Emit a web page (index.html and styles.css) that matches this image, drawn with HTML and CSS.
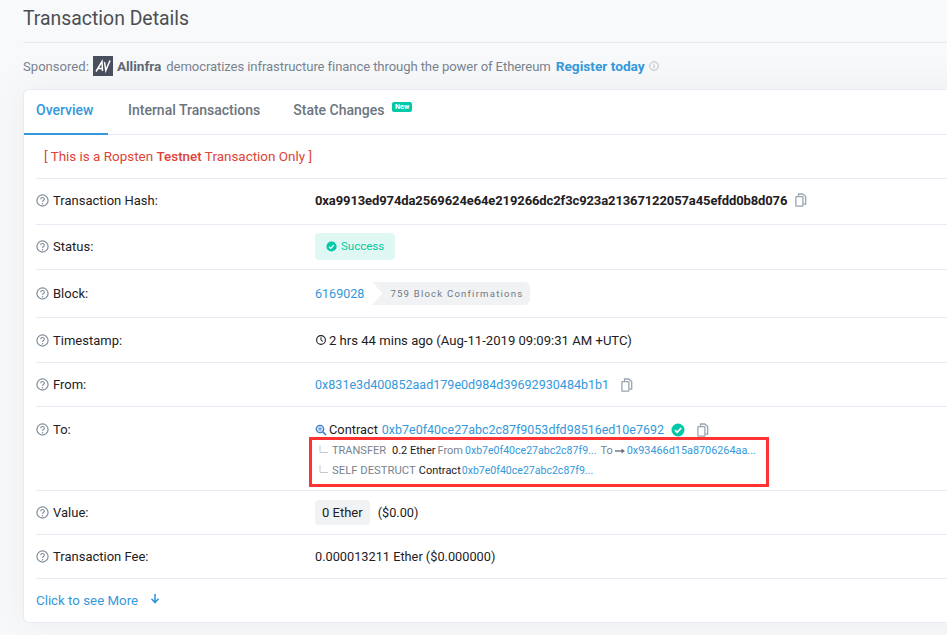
FILE: index.html
```html
<!DOCTYPE html>
<html lang="en">
<head>
<meta charset="utf-8">
<title>Transaction Details</title>
<link rel="stylesheet" href="styles.css">
</head>
<body>
<svg class="defs" width="0" height="0" aria-hidden="true">
  <symbol id="q" viewBox="0 0 14 14"><circle cx="7" cy="7" r="6" fill="none" stroke="#808c98" stroke-width="1.300"/><path d="M5 5.600c0-1.100.9-1.900 2-1.900s2 .8 2 1.800c0 1.500-2 1.400-2 3" fill="none" stroke="#808c98" stroke-width="1.200"/><circle cx="7" cy="10.400" r=".8" fill="#808c98"/></symbol>
  <symbol id="copy" viewBox="0 0 14 14"><path d="M4.500 3.500V1h4.200L11.700 3.500V11H9.500" fill="none" stroke="#9aa5b1" stroke-width="1.300"/><rect x="1.900" y="3.600" width="7" height="9.600" rx=".5" fill="#fff" stroke="#9aa5b1" stroke-width="1.300"/></symbol>
  <symbol id="check" viewBox="0 0 14 14"><circle cx="7" cy="7" r="6.500" fill="#00c9a7"/><path d="M3.900 7.200l2.200 2.200 4-4.200" fill="none" stroke="#fff" stroke-width="1.700"/></symbol>
  <symbol id="corner" viewBox="0 0 9 9"><path d="M1 0v7.500h8" fill="none" stroke="#c2c8d0" stroke-width="1"/></symbol>
</svg>
<main class="page">
  <h1 class="title">Transaction Details</h1>
  <p class="sponsor">
    <span>Sponsored:</span>
    <svg class="logo" viewBox="0 0 20 20" aria-hidden="true"><rect width="20" height="20" fill="#4a4f60"/><path d="M3 15.500L9 5.500l.5 9.500M5 12.500h4.300M11.500 6l1.300 8.500L17 4.500" fill="none" stroke="#fff" stroke-width="1.500"/></svg>
    <b class="brand">Allinfra</b>
    <span class="pitch">democratizes infrastructure finance through the power of Ethereum</span>
    <a class="register" href="#">Register today</a>
    <svg class="info" viewBox="0 0 10 10" aria-hidden="true"><circle cx="5" cy="5" r="4.300" fill="none" stroke="#a5adb8" stroke-width=".8"/><path d="M5 4.300v3M5 2.600v1" stroke="#a5adb8" stroke-width=".9"/></svg>
  </p>
  <section class="card">
    <nav class="tabs">
      <a class="tab active" href="#">Overview</a>
      <a class="tab second" href="#">Internal Transactions</a>
      <a class="tab" href="#">State Changes <sup class="new">New</sup></a>
    </nav>
    <div class="body">
      <div class="row notice"><span class="testnet">[ This is a Ropsten <b>Testnet</b> Transaction Only ]</span></div>
      <div class="row r-hash">
        <div class="label"><svg class="qi"><use href="#q"/></svg>Transaction Hash:</div>
        <div class="value"><b class="hash">0xa9913ed974da2569624e64e219266dc2f3c923a21367122057a45efdd0b8d076</b><svg class="copy"><use href="#copy"/></svg></div>
      </div>
      <div class="row r-status">
        <div class="label"><svg class="qi"><use href="#q"/></svg>Status:</div>
        <div class="value"><span class="success"><svg class="ok"><use href="#check"/></svg>Success</span></div>
      </div>
      <div class="row r-block">
        <div class="label"><svg class="qi"><use href="#q"/></svg>Block:</div>
        <div class="value"><a class="addr" href="#">6169028</a><span class="confirm">759 Block Confirmations</span></div>
      </div>
      <div class="row r-time">
        <div class="label"><svg class="qi"><use href="#q"/></svg>Timestamp:</div>
        <div class="value time"><svg class="clock" viewBox="0 0 12 12" aria-hidden="true"><circle cx="6" cy="6" r="4.400" fill="none" stroke="#1e2022" stroke-width="1.100"/><path d="M6 3.200V6.300L8 7.400" fill="none" stroke="#1e2022" stroke-width="1"/></svg>2 hrs 44 mins ago (Aug-11-2019 09:09:31 AM +UTC)</div>
      </div>
      <div class="row r-from">
        <div class="label"><svg class="qi"><use href="#q"/></svg>From:</div>
        <div class="value"><a class="addr" href="#">0x831e3d400852aad179e0d984d39692930484b1b1</a><svg class="copy wide"><use href="#copy"/></svg></div>
      </div>
      <div class="row r-to">
        <div class="label"><svg class="qi"><use href="#q"/></svg>To:</div>
        <div class="value column">
          <div class="contract">
            <svg class="search" viewBox="0 0 12 12" aria-hidden="true"><circle cx="5" cy="5" r="3.700" fill="#cfe2f5" stroke="#3f7fc1" stroke-width="1.300"/><path d="M7.800 7.800L11 11" stroke="#3f7fc1" stroke-width="1.700"/><path d="M3.400 5h3.200M5 3.400v3.200" stroke="#3f7fc1" stroke-width=".8"/></svg>
            <span>Contract</span>
            <a class="caddr" href="#">0xb7e0f40ce27abc2c87f9053dfd98516ed10e7692</a>
            <svg class="ok big"><use href="#check"/></svg>
            <svg class="copy wide"><use href="#copy"/></svg>
          </div>
          <div class="internal">
            <div class="mark"></div>
            <div class="tx">
              <svg class="corner"><use href="#corner"/></svg><span class="muted">TRANSFER</span>
              <span class="dark s1">0.2 Ether</span><span class="muted s2">From</span>
              <a class="s2 ia" href="#">0xb7e0f40ce27abc2c87f9...</a><span class="muted s3">To</span>
              <svg class="arrow" viewBox="0 0 10 8" aria-hidden="true"><path d="M0 4h8" stroke="#6b7280" stroke-width="1.400"/><path d="M6.500 1.500L10 4 6.500 6.500z" fill="#6b7280"/></svg>
              <a class="s2 ib" href="#">0x93466d15a8706264aa...</a>
            </div>
            <div class="tx">
              <svg class="corner"><use href="#corner"/></svg><span class="muted self">SELF DESTRUCT</span>
              <span class="dark s5">Contract</span>
              <a class="ic" href="#">0xb7e0f40ce27abc2c87f9...</a>
            </div>
          </div>
        </div>
      </div>
      <div class="row r-val">
        <div class="label"><svg class="qi"><use href="#q"/></svg>Value:</div>
        <div class="value"><span class="pill">0 Ether</span><span class="usd">($0.00)</span></div>
      </div>
      <div class="row r-fee">
        <div class="label"><svg class="qi"><use href="#q"/></svg>Transaction Fee:</div>
        <div class="value fee">0.000013211 Ether ($0.000000)</div>
      </div>
      <div class="more"><a href="#">Click to see More</a><svg class="down" viewBox="0 0 10 10" aria-hidden="true"><path d="M5 0v8M1.500 4.800L5 8.500l3.500-3.700" fill="none" stroke="#3498db" stroke-width="1.600"/></svg></div>
    </div>
  </section>
</main>
</body>
</html>
```
FILE: styles.css
```css
* { box-sizing: border-box; }
html, body { margin: 0; height: 100%; }
body {
  width: 947px;
  height: 635px;
  overflow: hidden;
  background: #f8f9fa;
  font-family: Roboto, "Liberation Sans", sans-serif;
  font-size: 13px;
  color: #1e2022;
}
a { color: #3498db; text-decoration: none; }
.defs { position: absolute; }
.page { width: 1040px; padding: 0 0 0 23px; }
.title {
  margin: 0;
  height: 43px;
  padding-top: 6px;
  font-size: 19.4px;
  font-weight: 400;
  line-height: 26px;
  color: #4a4f55;
  border-bottom: 1px solid #e7eaf3;
}
.sponsor {
  display: flex;
  align-items: center;
  height: 46px;
  margin: 0;
  color: #77838f;
  font-size: 13.1px;
  white-space: pre;
}
.logo { width: 20px; height: 20px; margin: 0 4px; }
.brand { color: #5f6873; font-weight: 700; font-size: 13.6px; margin-right: 5px; }
.pitch { letter-spacing: -.1px; }
.register { font-weight: 700; font-size: 13.7px; margin-left: 5px; }
.info { width: 10px; height: 10px; margin-left: 4px; }
.card {
  height: 534px;
  background: #fff;
  border: 1px solid #e7eaf3;
  border-radius: 6px;
  box-shadow: 0 0 35px rgba(140, 152, 164, .125);
}
.tabs { display: flex; height: 45px; border-bottom: 1px solid #e7eaf3; }
.tab {
  height: 45px;
  padding: 12px 12px 0;
  margin-right: 8px;
  color: #6c757e;
  font-weight: 500;
  font-size: 14px;
  line-height: 16px;
  white-space: nowrap;
}
.tab.active { width: 84px; color: #3498db; border-bottom: 2px solid #3498db; }
.tab.second { margin-right: 9px; }
.new {
  display: inline-block;
  vertical-align: 6px;
  margin-left: 4px;
  padding: 0 3px;
  height: 10px;
  border-radius: 2px;
  background: #00c9a7;
  color: #fff;
  font-size: 7.2px;
  line-height: 10px;
  font-weight: 700;
}
.body { padding: 0 0 0 12px; }
.row {
  display: flex;
  align-items: center;
  border-bottom: 1px solid #e7eaf3;
}
.notice { height: 44px; padding-left: 8px; }
.testnet { color: #de4437; font-size: 13.45px; }
.testnet b { font-weight: 500; }
.r-hash { height: 46px; padding-bottom: 3px; }
.r-status { height: 45px; padding-bottom: 2px; }
.r-block { height: 48px; }
.r-time { height: 45px; }
.r-from { height: 44px; }
.r-to { height: 84px; align-items: flex-start; padding-top: 15px; }
.r-val { height: 44px; }
.r-fee { height: 44px; }
.label { display: flex; align-items: center; width: 279px; flex: none; color: #1e2022; }
.qi { width: 13px; height: 13px; margin-right: 4px; flex: none; }
.value { display: flex; align-items: center; white-space: nowrap; }
.column { flex-direction: column; align-items: flex-start; }
.hash { font-weight: 700; letter-spacing: -.11px; }
.addr { font-size: 12.55px; }
.caddr { font-size: 12.47px; }
.fee { font-size: 12.75px; }
.time { font-size: 13.1px; }
.copy { width: 14px; height: 14px; margin-left: 7px; }
.copy.wide { margin-left: 11px; }
.success {
  display: flex;
  align-items: center;
  height: 27px;
  padding: 0 11px;
  border-radius: 4px;
  background: rgba(0, 201, 167, .12);
  color: #00c9a7;
  font-size: 11.5px;
}
.ok { width: 11px; height: 11px; margin-right: 4px; }
.ok.big { width: 14px; height: 14px; margin: 0 0 0 7px; }
.confirm {
  display: flex;
  align-items: center;
  height: 23px;
  margin-left: 8px;
  padding: 0 7px 0 18px;
  background: #f1f2f4;
  clip-path: polygon(0 0, calc(100% - 4px) 0, 100% 4px, 100% calc(100% - 4px), calc(100% - 4px) 100%, 0 100%, 10px 50%);
  color: #6f7a86;
  font-size: 9.6px;
  letter-spacing: 1.2px;
}
.clock { width: 12px; height: 12px; margin-right: 2px; }
.contract { display: flex; align-items: center; }
.contract span { font-size: 12.8px; margin-right: 4px; }
.search { width: 12px; height: 12px; margin-right: 2px; }
.internal { position: relative; margin-top: 4px; font-size: 11px; line-height: 20px; }
.mark {
  position: absolute;
  left: -6px;
  top: -4px;
  width: 460px;
  height: 50px;
  border: 3px solid #ff3333;
}
.tx { display: flex; align-items: center; height: 20px; padding-left: 4px; }
.corner { width: 9px; height: 9px; margin: -4px 4px 0 0; }
.muted { color: #77838f; }
.self { font-size: 11.3px; }
.dark { color: #1e2022; }
.ia { font-size: 10.55px; }
.ib { font-size: 10.85px; }
.ic { font-size: 10.55px; margin-left: 1px; }
.s1 { margin-left: 6px; }
.s2 { margin-left: 2px; }
.s3 { margin-left: 4px; }
.s5 { margin-left: 3px; }
.arrow { width: 10px; height: 8px; margin-left: 2px; }
.pill {
  display: flex;
  align-items: center;
  height: 25px;
  padding: 0 7px;
  border-radius: 4px;
  background: #f1f2f4;
}
.usd { margin-left: 8px; font-size: 12.75px; }
.more { display: flex; align-items: center; height: 44px; padding-bottom: 1px; font-size: 13.3px; }
.down { width: 10px; height: 10px; margin: -4px 0 0 12px; }
```
